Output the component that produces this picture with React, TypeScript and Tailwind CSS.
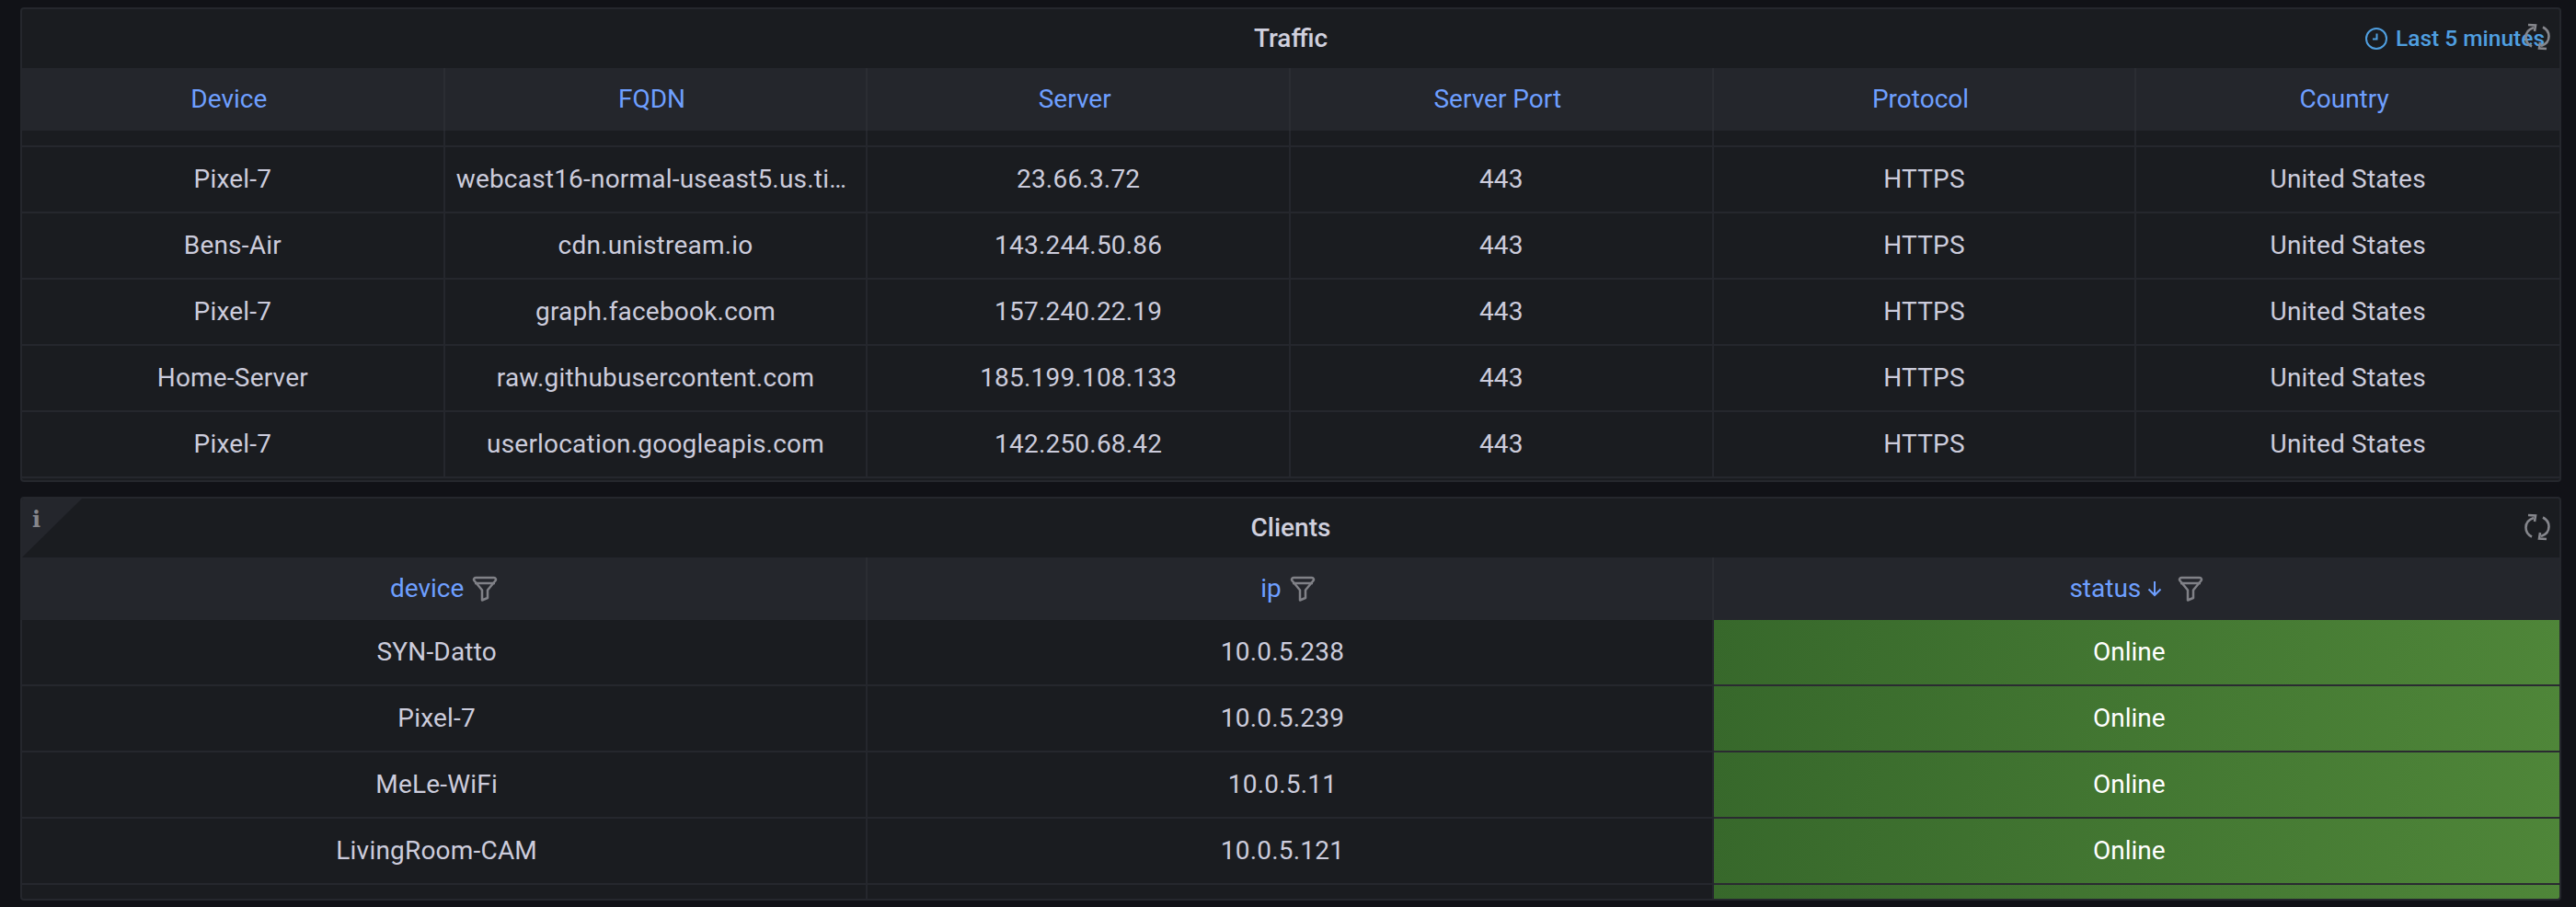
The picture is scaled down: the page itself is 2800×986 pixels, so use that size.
import type { ReactNode } from "react";

const traffic = [
  ["Pixel-7", "webcast16-normal-useast5.us.tiktokv.com", "23.66.3.72", "443", "HTTPS", "United States"],
  ["Bens-Air", "cdn.unistream.io", "143.244.50.86", "443", "HTTPS", "United States"],
  ["Pixel-7", "graph.facebook.com", "157.240.22.19", "443", "HTTPS", "United States"],
  ["Home-Server", "raw.githubusercontent.com", "185.199.108.133", "443", "HTTPS", "United States"],
  ["Pixel-7", "userlocation.googleapis.com", "142.250.68.42", "443", "HTTPS", "United States"],
];

const clients = [
  ["SYN-Datto", "10.0.5.238"],
  ["Pixel-7", "10.0.5.239"],
  ["MeLe-WiFi", "10.0.5.11"],
  ["LivingRoom-CAM", "10.0.5.121"],
  ["", ""],
];

function RefreshIcon({ className }: { className: string }) {
  return (
    <svg viewBox="0 0 28 30" fill="none" stroke="#85868c" strokeWidth="2.6" className={className}>
      <path d="M10 5C4 7 1.500 11.500 1.500 15.500c0 4.500 2.500 8 6.500 10" />
      <path d="M4 2l8 .5-1 6.500" />
      <path d="M18 25c6-2 8.500-6.500 8.500-10.500 0-4.500-2.500-8-6.500-10" />
      <path d="M24 28l-8-.5 1-6.500" />
    </svg>
  );
}

function FunnelIcon() {
  return (
    <svg viewBox="0 0 28 28" fill="none" stroke="#808187" strokeWidth="2.5" strokeLinejoin="round" className="h-[28px] w-[28px] shrink-0">
      <path d="M4 2h20a2 2 0 0 1 1.500 3.300L17 15.500V24l-6 2.500V15.500L2.500 5.300A2 2 0 0 1 4 2Z" />
      <path d="M3 8h22" />
    </svg>
  );
}

function ClockIcon() {
  return (
    <svg viewBox="0 0 24 24" fill="none" stroke="#4f9fe0" strokeWidth="2" className="h-6 w-6 shrink-0">
      <circle cx="12" cy="12" r="11" />
      <path d="M12.500 6.500v6H8" />
    </svg>
  );
}

function SortIcon() {
  return (
    <svg viewBox="0 0 18 20" fill="none" stroke="#6e9fff" strokeWidth="2" className="h-[20px] w-[18px] shrink-0">
      <path d="M9 2v15M2.500 10.500 9 17l6.500-6.500" />
    </svg>
  );
}

function Cell({
  children,
  divider = true,
  head = false,
  pad = "px-3",
}: {
  children?: ReactNode;
  divider?: boolean;
  head?: boolean;
  pad?: string;
}) {
  return (
    <div
      className={`flex min-w-0 items-center justify-center ${pad} ${divider ? "border-r-2" : ""} ${
        head ? "border-[#2b2d33] text-[#6e9fff]" : "border-[#25272d] tracking-[0.2px]"
      }`}
    >
      {children}
    </div>
  );
}

function Panel({ height, children }: { height: string; children: ReactNode }) {
  return (
    <section className={`relative flex flex-col overflow-hidden rounded-[4px] border-2 border-[#25272d] bg-[#1a1c20] ${height}`}>
      {children}
    </section>
  );
}

function Title({ children }: { children: ReactNode }) {
  return (
    <div className="relative flex h-[64px] shrink-0 items-center justify-center font-medium text-[#d0d0de]">
      {children}
    </div>
  );
}

export default function App() {
  return (
    <div
      className="h-[986px] w-[2800px] overflow-hidden bg-[#111217] pl-[22px] pr-[16px] pt-[8px] text-[28px] text-[#ccccdc]"
      style={{ fontFamily: "Roboto, sans-serif" }}
    >
      <Panel height="h-[516px]">
        <Title>
          Traffic
          <div className="absolute right-[16px] top-[18px] flex items-center gap-[9px] text-[24.500px] leading-[28px] text-[#4f9fe0]">
            <ClockIcon />
            Last 5 minutes
          </div>
          <RefreshIcon className="absolute right-[10px] top-[15px] h-[30px] w-[28px]" />
        </Title>
        <div className="grid h-[68px] shrink-0 grid-cols-6 bg-[#24262c]">
          {["Device", "FQDN", "Server", "Server Port", "Protocol", "Country"].map((h, i) => (
            <Cell key={h} head divider={i < 5} pad="pl-[8px] pr-[16px]">
              {h}
            </Cell>
          ))}
        </div>
        <div className="grid h-[18px] shrink-0 grid-cols-6 border-b-2 border-[#25272d]">
          {[0, 1, 2, 3, 4, 5].map((i) => (
            <Cell key={i} divider={i < 5} />
          ))}
        </div>
        {traffic.map((row, r) => (
          <div key={r} className="grid h-[72px] shrink-0 grid-cols-6 border-b-2 border-[#25272d]">
            {row.map((v, i) => (
              <Cell key={i} divider={i < 5}>
                <span className="truncate">{v}</span>
              </Cell>
            ))}
          </div>
        ))}
      </Panel>

      <div className="mt-[16px]">
        <Panel height="h-[439px]">
          <div className="absolute left-0 top-0 z-10 h-[64px] w-[65px] bg-[#24262c] [clip-path:polygon(0_0,100%_0,0_100%)]">
            <span className="absolute left-[11px] top-[11px] text-[24px] font-bold leading-[24px] text-[#85868c]" style={{ fontFamily: "'DejaVu Serif', serif" }}>
              i
            </span>
          </div>
          <Title>
            Clients
            <RefreshIcon className="absolute right-[10px] top-[16px] h-[30px] w-[28px]" />
          </Title>
          <div className="grid h-[68px] shrink-0 grid-cols-3 bg-[#24262c]">
            <Cell head>
              device
              <span className="ml-[9px]"><FunnelIcon /></span>
            </Cell>
            <Cell head pad="pl-[10px] pr-[14px]">
              ip
              <span className="ml-[9px]"><FunnelIcon /></span>
            </Cell>
            <Cell head divider={false}>
              status
              <span className="ml-[6px]"><SortIcon /></span>
              <span className="ml-[16px]"><FunnelIcon /></span>
            </Cell>
          </div>
          {clients.map((row, r) => (
            <div key={r} className="grid h-[72px] shrink-0 grid-cols-3">
              <div className="col-span-2 grid grid-cols-2 border-b-2 border-[#25272d]">
                <Cell pad="pl-[12px] pr-[28px]">{row[0]}</Cell>
                <Cell pad="pl-[12px] pr-[28px]">{row[1]}</Cell>
              </div>
              <div className="flex items-center justify-center border-b-2 border-[#2a2b31] bg-[linear-gradient(100deg,#37682b,#4f8639)] pr-[16px] text-white">
                {row[0] && "Online"}
              </div>
            </div>
          ))}
        </Panel>
      </div>
    </div>
  );
}
